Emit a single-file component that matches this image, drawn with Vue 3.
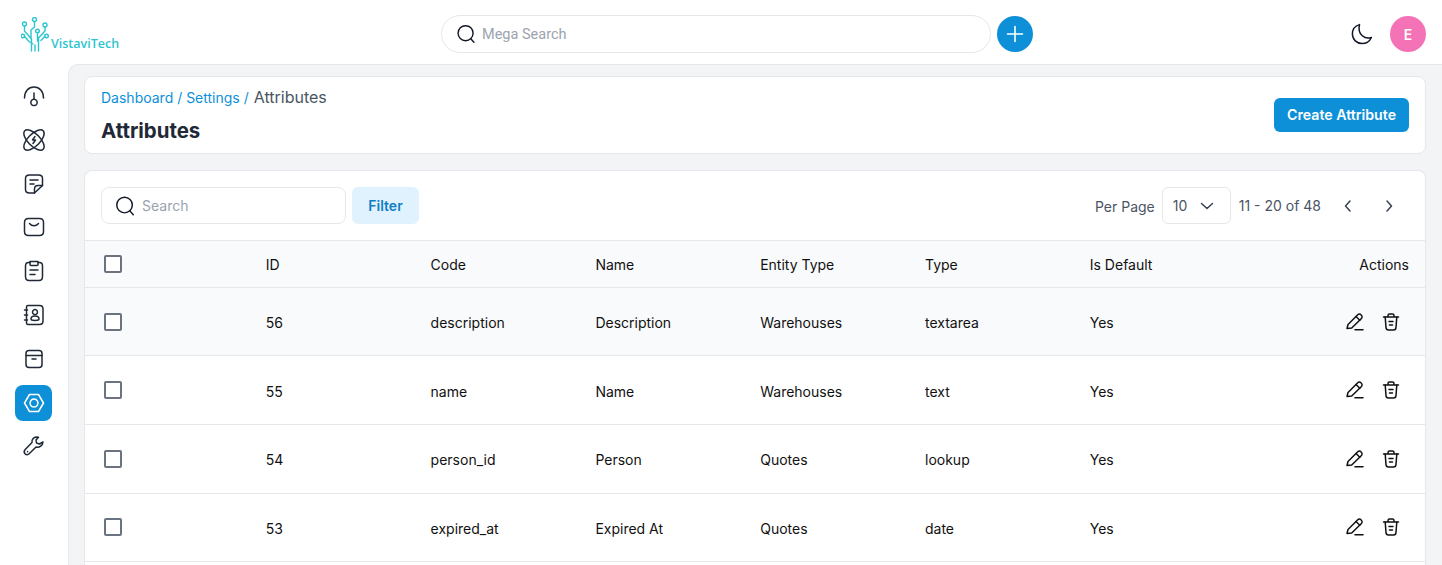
<template>
  <div class="app">
    <header class="topbar">
      <div class="logo">
        <svg class="logo-mark" width="28" height="36" viewBox="0 0 28 36" fill="none" stroke="#2cc5cf" stroke-width="1.4" stroke-linecap="round" stroke-linejoin="round">
          <circle cx="13.5" cy="2.5" r="2" />
          <circle cx="3.5" cy="7" r="2" />
          <circle cx="24" cy="8" r="2" />
          <circle cx="1.8" cy="19" r="1.8" />
          <circle cx="25.5" cy="19" r="1.8" />
          <circle cx="16.5" cy="14" r="1.8" />
          <path d="M13.5 4.5V10L10 13V22M3.5 9V14L10.5 22V34M24 10V14L17.5 21V34M3.6 19.5L8 24.5L12 27M23.7 19.5L20 23.5M16.5 16V24M14 34V28" />
        </svg>
        <span class="logo-text">VistaviTech</span>
      </div>
      <div class="mega">
        <label class="mega-search">
          <svg width="20" height="20" viewBox="0 0 24 24" fill="none" stroke="#111827" stroke-width="1.7" stroke-linecap="round">
            <circle cx="11.5" cy="11" r="9" />
            <path d="M18 18L21.5 22" />
          </svg>
          <span class="mega-placeholder">Mega Search</span>
        </label>
        <button class="round-add" type="button">
          <svg width="22" height="22" viewBox="0 0 22 22" fill="none" stroke="#fff" stroke-width="1.6" stroke-linecap="round">
            <path d="M11 3.5V18.5M3.5 11H18.5" />
          </svg>
        </button>
      </div>
      <div class="top-right">
        <svg width="24" height="24" viewBox="0 0 24 24" fill="none" stroke="#111827" stroke-width="1.5" stroke-linejoin="round">
          <path d="M9.5 2.6C6 3.6 2.4 6.8 2.4 12C2.4 17.6 6.8 21.6 12 21.6C16.5 21.6 19.8 19 21.4 15.5C15.5 17.6 7 13 9.5 2.6Z" />
        </svg>
        <div class="avatar">E</div>
      </div>
    </header>

    <div class="body">
      <nav class="sidebar">
        <a v-for="item in navItems" :key="item.name" class="nav-item" :class="{ active: item.active }">
          <svg width="24" height="24" viewBox="0 0 24 24" fill="none" stroke="currentColor" stroke-width="1.5" stroke-linecap="round" stroke-linejoin="round">
            <path v-for="d in item.paths" :key="d" :d="d" />
          </svg>
        </a>
      </nav>

      <main class="content">
        <section class="card head-card">
          <div>
            <div class="crumbs">
              <a>Dashboard</a> / <a>Settings</a> / <span>Attributes</span>
            </div>
            <h1>Attributes</h1>
          </div>
          <button class="btn-primary" type="button">Create Attribute</button>
        </section>

        <section class="card table-card">
          <div class="toolbar">
            <div class="toolbar-left">
              <label class="search">
                <svg width="22" height="22" viewBox="0 0 24 24" fill="none" stroke="#111827" stroke-width="1.6" stroke-linecap="round">
                  <circle cx="11.5" cy="11" r="8.5" />
                  <path d="M17.6 17.6L21 21.5" />
                </svg>
                <span>Search</span>
              </label>
              <button class="btn-filter" type="button">Filter</button>
            </div>
            <div class="pager">
              <span class="per-label">Per Page</span>
              <div class="per-select">
                <span>10</span>
                <svg width="16" height="16" viewBox="0 0 16 16" fill="none" stroke="#374151" stroke-width="1.5" stroke-linecap="round" stroke-linejoin="round">
                  <path d="M2.5 5.5L8 10.5L13.5 5.5" />
                </svg>
              </div>
              <span class="range">11 - 20 of 48</span>
              <div class="arrows">
                <svg width="16" height="16" viewBox="0 0 16 16" fill="none" stroke="#374151" stroke-width="1.5" stroke-linecap="round" stroke-linejoin="round">
                  <path d="M10 3L5.5 8L10 13" />
                </svg>
                <svg width="16" height="16" viewBox="0 0 16 16" fill="none" stroke="#374151" stroke-width="1.5" stroke-linecap="round" stroke-linejoin="round">
                  <path d="M6 3L10.5 8L6 13" />
                </svg>
              </div>
            </div>
          </div>

          <div class="row thead">
            <div class="cell-check"><span class="check" /></div>
            <div v-for="col in columns" :key="col" class="cell">{{ col }}</div>
            <div class="cell actions-head">Actions</div>
          </div>

          <div v-for="(row, i) in rows" :key="row.id" class="row" :class="{ hovered: i === 0 }">
            <div class="cell-check"><span class="check" /></div>
            <div class="cell">{{ row.id }}</div>
            <div class="cell">{{ row.code }}</div>
            <div class="cell">{{ row.name }}</div>
            <div class="cell">{{ row.entity }}</div>
            <div class="cell">{{ row.type }}</div>
            <div class="cell">Yes</div>
            <div class="actions">
              <svg width="20" height="20" viewBox="0 0 20 20" fill="none" stroke="#111" stroke-width="1.5" stroke-linecap="round" stroke-linejoin="round">
                <path d="M2 16.5L3 12.5L12.5 3C13.5 2 15 1.8 16.2 3C17.5 4.2 17.2 5.7 16.2 6.7L6.7 16L2 16.5Z" />
                <path d="M11 4.5L14.8 8.2M10 17.8H18" />
              </svg>
              <svg width="20" height="20" viewBox="0 0 20 20" fill="none" stroke="#111" stroke-width="1.5" stroke-linecap="round" stroke-linejoin="round">
                <path d="M2.5 5H17.5M7 5V3.5C7 2.5 7.5 2 8.5 2H11.5C12.5 2 13 2.5 13 3.5V5" />
                <path d="M4.2 5L5 15.5C5.1 17 6 18 7.5 18H12.5C14 18 14.9 17 15 15.5L15.8 5" />
                <path d="M8 9.5H12M8.5 13H11.5" />
              </svg>
            </div>
          </div>
        </section>
      </main>
    </div>
  </div>
</template>

<script setup>
const navItems = [
  { name: 'dashboard', paths: ['M2.5 14C2.5 7.5 6.5 3 12 3C17.5 3 21.5 7.5 21.5 14', 'M12 9V15', 'M12 15.2a3.2 3.2 0 1 0 0.01 0'] },
  { name: 'leads', paths: ['M2.8 2.8A13 6 45 1 1 21.2 21.2A13 6 45 1 1 2.8 2.8Z', 'M21.2 2.8A13 6 -45 1 1 2.8 21.2A13 6 -45 1 1 21.2 2.8Z', 'M13 8.5L10.5 12H13.5L11 15.5'] },
  { name: 'notes', paths: ['M12.5 21H7.5C5 21 3.5 19.5 3.5 17.5V6.5C3.5 4.5 5 3 7.5 3H16.5C19 3 20.5 4.5 20.5 6.5V13.5L12.5 21Z', 'M12.5 21V17C12.5 15 14 13.5 16 13.5H20.5', 'M8 8H16M8 12H12'] },
  { name: 'mail', paths: ['M6.5 3.5H17.5C20 3.5 21.5 5 21.5 7.5V16.5C21.5 19 20 20.5 17.5 20.5H6.5C4 20.5 2.5 19 2.5 16.5V7.5C2.5 5 4 3.5 6.5 3.5Z', 'M7.5 8.5C10 11.5 14 11.5 16.5 8.5'] },
  { name: 'tasks', paths: ['M8 3.5H6.5C4.5 3.5 3.5 5 3.5 7V17.5C3.5 19.5 4.5 21.5 7 21.5H17C19.5 21.5 20.5 19.5 20.5 17.5V7C20.5 5 19.5 3.5 17.5 3.5H16', 'M8 2.5H16V5.5C16 6 15.5 6.5 15 6.5H9C8.5 6.5 8 6 8 5.5V2.5Z', 'M8 11H16M8 15.5H13'] },
  { name: 'contacts', paths: ['M6 2.5H17.5C19.5 2.5 21 4 21 6V18C21 20 19.5 21.5 17.5 21.5H6C5 21.5 4.5 21 4.5 20V4C4.5 3 5 2.5 6 2.5Z', 'M2.5 7H5.5M2.5 12H5.5M2.5 17H5.5', 'M13 6.5a2.5 2.5 0 1 0 0.01 0', 'M9 16C9 14 10.5 13 13 13C15.5 13 17 14 17 16C17 17.5 15.5 17.5 13 17.5C10.5 17.5 9 17.5 9 16Z'] },
  { name: 'products', paths: ['M4 8.5H20V17.5C20 19.5 19 20.5 17 20.5H7C5 20.5 4 19.5 4 17.5V8.5Z', 'M4 8.5V6.5C4 4.5 5 3.5 7 3.5H17C19 3.5 20 4.5 20 6.5V8.5', 'M10 12H14'] },
  { name: 'settings', active: true, paths: ['M7.5 3.5H16.5L21.5 12L16.5 20.5H7.5L2.5 12L7.5 3.5Z', 'M12 8a4 4 0 1 0 0.01 0'] },
  { name: 'tools', paths: ['M14.5 3C11.5 3.2 9.5 5.5 10 8.5L3.2 15.5C2 16.8 2 18.5 3 19.7C4.2 21 6 21 7.2 19.8L14 13C17.5 14 20.8 11.5 21 8L17.5 10L14.5 9L14 6L16.5 3.2C15.8 3 15.2 3 14.5 3Z', 'M5.5 17.5L5.6 17.6'] },
]

const columns = ['ID', 'Code', 'Name', 'Entity Type', 'Type', 'Is Default']

const rows = [
  { id: 56, code: 'description', name: 'Description', entity: 'Warehouses', type: 'textarea' },
  { id: 55, code: 'name', name: 'Name', entity: 'Warehouses', type: 'text' },
  { id: 54, code: 'person_id', name: 'Person', entity: 'Quotes', type: 'lookup' },
  { id: 53, code: 'expired_at', name: 'Expired At', entity: 'Quotes', type: 'date' },
]
</script>

<style>
html,
body {
  margin: 0;
  height: 100%;
  overflow: hidden;
  background: #fff;
}
</style>

<style scoped>
.app {
  height: 565px;
  overflow: hidden;
  font-family: Inter, "Liberation Sans", sans-serif;
  font-size: 14px;
  color: #111;
}

.topbar {
  height: 64px;
  display: flex;
  align-items: center;
  padding: 4px 16px 0 21px;
  justify-content: space-between;
  box-sizing: border-box;
}

.logo {
  width: 420px;
  display: flex;
  align-items: flex-end;
  margin-top: 1px;
}

.logo-mark {
  flex-shrink: 0;
}

.logo-text {
  margin-left: 2px;
  font-family: "Open Sans", sans-serif;
  font-size: 12.5px;
  font-weight: 600;
  color: #2cc5cf;
  line-height: 16px;
  margin-bottom: 1px;
}

.mega {
  display: flex;
  align-items: center;
  gap: 6px;
}

.mega-search {
  width: 550px;
  height: 38px;
  border: 1px solid #e5e7eb;
  border-radius: 19px;
  display: flex;
  align-items: center;
  gap: 6px;
  padding-left: 14px;
  box-sizing: border-box;
}

.mega-placeholder {
  font-family: Roboto, sans-serif;
  font-size: 14.5px;
  color: #9ca3af;
}

.round-add {
  width: 36px;
  height: 36px;
  border: 0;
  border-radius: 50%;
  background: #0e90d9;
  padding: 0;
  display: flex;
  align-items: center;
  justify-content: center;
}

.top-right {
  width: 393px;
  display: flex;
  justify-content: flex-end;
  align-items: center;
  gap: 16px;
}

.avatar {
  width: 36px;
  height: 36px;
  border-radius: 50%;
  background: #f472b6;
  color: #fff;
  font-weight: 600;
  font-size: 14px;
  display: flex;
  align-items: center;
  justify-content: center;
}

.body {
  display: flex;
  height: 501px;
}

.sidebar {
  width: 68px;
  flex-shrink: 0;
  display: flex;
  flex-direction: column;
  align-items: center;
  gap: 7.8px;
  padding: 14px 1px 0 0;
  box-sizing: border-box;
}

.nav-item {
  width: 37px;
  height: 36px;
  border-radius: 8px;
  display: flex;
  align-items: center;
  justify-content: center;
  color: #1f2937;
}

.nav-item.active {
  background: #0e90d9;
  color: #fff;
}

.content {
  flex: 1;
  background: #f3f4f6;
  border-top: 1px solid #e5e7eb;
  border-left: 1px solid #e5e7eb;
  border-top-left-radius: 10px;
  padding: 11px 16px 0 15px;
  display: flex;
  flex-direction: column;
  gap: 16px;
  min-width: 0;
}

.card {
  background: #fff;
  border: 1px solid #e5e7eb;
  border-radius: 8px;
}

.head-card {
  height: 78px;
  box-sizing: border-box;
  flex-shrink: 0;
  padding: 0 16px;
  display: flex;
  align-items: center;
  justify-content: space-between;
}

.crumbs {
  font-size: 14px;
  line-height: 20px;
  color: #0e90d9;
}

.crumbs span {
  font-size: 16px;
  margin-left: 1px;
  color: #4b5563;
}

h1 {
  margin: 11px 0 0;
  font-size: 20.4px;
  line-height: 24px;
  font-weight: 700;
  color: #1f2937;
}

.btn-primary {
  width: 135px;
  height: 34px;
  border: 0;
  border-radius: 6px;
  padding: 0 0 2px;
  background: #0e90d9;
  color: #fff;
  font: 600 14.2px Inter, sans-serif;
}

.table-card {
  flex: 1;
  overflow: hidden;
  border-bottom: 0;
  border-bottom-left-radius: 0;
  border-bottom-right-radius: 0;
}

.toolbar {
  height: 69px;
  box-sizing: border-box;
  padding: 0 16px;
  display: flex;
  align-items: center;
  justify-content: space-between;
}

.toolbar-left {
  display: flex;
  gap: 6px;
}

.search {
  width: 245px;
  height: 37px;
  border: 1px solid #e5e7eb;
  border-radius: 8px;
  box-sizing: border-box;
  display: flex;
  align-items: center;
  gap: 6px;
  padding-left: 12px;
  color: #9ca3af;
}

.btn-filter {
  width: 67px;
  height: 37px;
  border: 0;
  border-radius: 6px;
  background: #e0f2fe;
  color: #0e7fc4;
  font: 600 14px Inter, sans-serif;
}

.pager {
  display: flex;
  align-items: center;
  color: #4b5563;
}

.per-label {
  margin-top: 2px;
  margin-right: 7px;
}

.per-select {
  width: 69px;
  height: 37px;
  border: 1px solid #e5e7eb;
  border-radius: 6px;
  box-sizing: border-box;
  display: flex;
  align-items: center;
  justify-content: space-between;
  padding: 0 15px 0 10px;
  margin-right: 8px;
}

.arrows {
  display: flex;
  gap: 25px;
  margin-left: 19px;
  margin-right: 12px;
}

.row {
  display: grid;
  grid-template-columns: repeat(7, 164.8px) 1fr;
  align-items: center;
  padding: 0 16px;
  height: 68.6px;
  box-sizing: border-box;
  border-bottom: 1px solid #e5e7eb;
  background: #fff;
}

.row.thead {
  height: 47.8px;
  border-top: 1px solid #e5e7eb;
  background: #f9fafb;
}

.row.hovered {
  background: #f9fafb;
}

.cell {
  padding-top: 2px;
}

.actions-head {
  text-align: right;
  white-space: nowrap;
}

.actions {
  display: flex;
  justify-content: flex-end;
  gap: 16px;
  padding-right: 8px;
}

.check {
  display: block;
  width: 18px;
  height: 18px;
  margin-left: 3px;
  border: 2px solid #6b7280;
  border-radius: 2px;
  box-sizing: border-box;
  background: #fff;
}
</style>
